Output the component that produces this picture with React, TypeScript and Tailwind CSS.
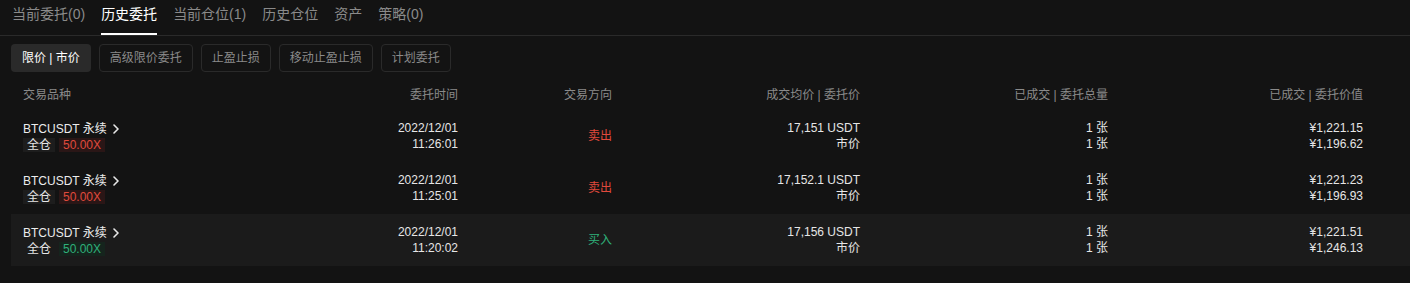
import React from 'react';

interface Order {
  time: [string, string];
  side: 'buy' | 'sell';
  price: string;
  filled: string;
  total: string;
  value: [string, string];
}

const orders: Order[] = [
  { time: ['2022/12/01', '11:26:01'], side: 'sell', price: '17,151 USDT', filled: '1 张', total: '1 张', value: ['¥1,221.15', '¥1,196.62'] },
  { time: ['2022/12/01', '11:25:01'], side: 'sell', price: '17,152.1 USDT', filled: '1 张', total: '1 张', value: ['¥1,221.23', '¥1,196.93'] },
  { time: ['2022/12/01', '11:20:02'], side: 'buy', price: '17,156 USDT', filled: '1 张', total: '1 张', value: ['¥1,221.51', '¥1,246.13'] },
];

const tabs = ['当前委托(0)', '历史委托', '当前仓位(1)', '历史仓位', '资产', '策略(0)'];
const filters = ['限价 | 市价', '高级限价委托', '止盈止损', '移动止盈止损', '计划委托'];

const cols = 'grid grid-cols-[235px_200px_154px_248px_248px_255px] pl-3';

const Chevron = () => (
  <svg width="8" height="10" viewBox="0 0 8 10" className="ml-[5px]">
    <path d="M2 1l4 4-4 4" fill="none" stroke="#e8e8e8" strokeWidth="1.6" strokeLinecap="round" strokeLinejoin="round" />
  </svg>
);

const App: React.FC = () => {
  return (
    <div
      className="w-[1410px] h-[283px] bg-[#131313] text-[12px] text-[#e6e6e6] overflow-hidden"
      style={{ fontFamily: '"Liberation Sans", "Noto Sans CJK SC", sans-serif' }}
    >
      {/* tabs */}
      <div className="flex gap-4 pl-3 h-[36px] border-b border-[#2a2a2a]">
        {tabs.map((t, i) => (
          <div
            key={t}
            className={`relative h-[35px] pt-[4px] text-[14px] leading-[20px] ${i === 1 ? 'text-white' : 'text-[#8a8a8a]'}`}
          >
            {t}
            {i === 1 && <div className="absolute left-0 right-0 bottom-0 h-[2px] bg-white" />}
          </div>
        ))}
      </div>

      {/* order type filters */}
      <div className="flex gap-2 pl-[11px] mt-2">
        {filters.map((f, i) => (
          <div
            key={f}
            className={`h-[28px] px-[10px] rounded flex items-center leading-none ${
              i === 0 ? 'bg-[#2a2a2a] text-white px-[11px]' : 'border border-[#2a2a2a] text-[#8a8a8a]'
            }`}
          >
            {f}
          </div>
        ))}
      </div>

      {/* table */}
      <div className="ml-[11px] mt-2">
        <div className={`${cols} h-[30px] items-center text-[#8a8a8a]`}>
          <div>交易品种</div>
          <div className="text-right">委托时间</div>
          <div className="text-right">交易方向</div>
          <div className="text-right">成交均价 | 委托价</div>
          <div className="text-right">已成交 | 委托总量</div>
          <div className="text-right">已成交 | 委托价值</div>
        </div>

        {orders.map((o, i) => (
          <div key={i} className={`${cols} h-[52px] items-center leading-[16px] ${i === 2 ? 'bg-[#1b1b1b]' : ''}`}>
            <div className="flex flex-col gap-[1px]">
              <div className="flex items-center text-[#ececec]">
                BTCUSDT 永续
                <Chevron />
              </div>
              <div className="flex gap-1 leading-[14px]">
                <span className={`px-1 text-[#e6e6e6] ${i === 2 ? '' : 'bg-[#1d1d1d]'}`}>全仓</span>
                <span
                  className={`px-1 ${
                    o.side === 'sell' ? 'bg-[#2a1616] text-[#e04a3c]' : 'bg-[#15241d] text-[#2fb07a]'
                  }`}
                >
                  50.00X
                </span>
              </div>
            </div>
            <div className="flex flex-col items-end">
              <span>{o.time[0]}</span>
              <span>{o.time[1]}</span>
            </div>
            <div className={`text-right ${o.side === 'sell' ? 'text-[#e04a3c]' : 'text-[#2fb07a]'}`}>
              {o.side === 'sell' ? '卖出' : '买入'}
            </div>
            <div className="flex flex-col items-end">
              <span>{o.price}</span>
              <span>市价</span>
            </div>
            <div className="flex flex-col items-end">
              <span>{o.filled}</span>
              <span>{o.total}</span>
            </div>
            <div className="flex flex-col items-end">
              <span>{o.value[0]}</span>
              <span>{o.value[1]}</span>
            </div>
          </div>
        ))}
      </div>
    </div>
  );
};

export default App;
